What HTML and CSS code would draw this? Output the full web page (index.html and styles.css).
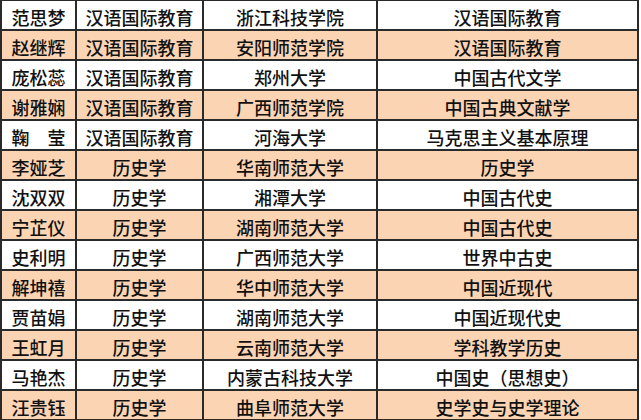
FILE: index.html
```html
<!DOCTYPE html>
<html lang="zh-CN">
<head>
<meta charset="utf-8">
<title>名单</title>
<link rel="stylesheet" href="styles.css">
</head>
<body>
<div class="sheet">
  <div class="c">范思梦</div><div class="c">汉语国际教育</div><div class="c">浙江科技学院</div><div class="c">汉语国际教育</div>
  <div class="c alt">赵继辉</div><div class="c alt">汉语国际教育</div><div class="c alt">安阳师范学院</div><div class="c alt">汉语国际教育</div>
  <div class="c">庞松蕊</div><div class="c">汉语国际教育</div><div class="c">郑州大学</div><div class="c">中国古代文学</div>
  <div class="c alt">谢雅娴</div><div class="c alt">汉语国际教育</div><div class="c alt">广西师范学院</div><div class="c alt">中国古典文献学</div>
  <div class="c">鞠　莹</div><div class="c">汉语国际教育</div><div class="c">河海大学</div><div class="c">马克思主义基本原理</div>
  <div class="c alt">李娅芝</div><div class="c alt">历史学</div><div class="c alt">华南师范大学</div><div class="c alt">历史学</div>
  <div class="c">沈双双</div><div class="c">历史学</div><div class="c">湘潭大学</div><div class="c">中国古代史</div>
  <div class="c alt">宁芷仪</div><div class="c alt">历史学</div><div class="c alt">湖南师范大学</div><div class="c alt">中国古代史</div>
  <div class="c">史利明</div><div class="c">历史学</div><div class="c">广西师范大学</div><div class="c">世界中古史</div>
  <div class="c alt">解坤禧</div><div class="c alt">历史学</div><div class="c alt">华中师范大学</div><div class="c alt">中国近现代</div>
  <div class="c">贾苗娟</div><div class="c">历史学</div><div class="c">湖南师范大学</div><div class="c">中国近现代史</div>
  <div class="c alt">王虹月</div><div class="c alt">历史学</div><div class="c alt">云南师范大学</div><div class="c alt">学科教学历史</div>
  <div class="c">马艳杰</div><div class="c">历史学</div><div class="c">内蒙古科技大学</div><div class="c">中国史（思想史）</div>
  <div class="c alt">汪贵钰</div><div class="c alt">历史学</div><div class="c alt">曲阜师范大学</div><div class="c alt">史学史与史学理论</div>
</div>
</body>
</html>
```
FILE: styles.css
```css
html, body {
  margin: 0;
  padding: 0;
  background: #ffffff;
}
.sheet {
  display: grid;
  grid-template-columns: 73px 125px 172px 259px;
  grid-auto-rows: 28px;
  gap: 2px;
  padding: 1px 2px 2px 2px;
  background: #2a2a2a;
  width: max-content;
}
.c {
  display: flex;
  align-items: center;
  justify-content: center;
  padding-top: 4px;
  box-sizing: border-box;
  background: #ffffff;
  color: #111111;
  font-family: "Noto Sans CJK SC", "Noto Sans", sans-serif;
  font-size: 18px;
  font-weight: 500;
  line-height: 1;
  white-space: nowrap;
}
.alt {
  background: #fbd4b4;
}
```
